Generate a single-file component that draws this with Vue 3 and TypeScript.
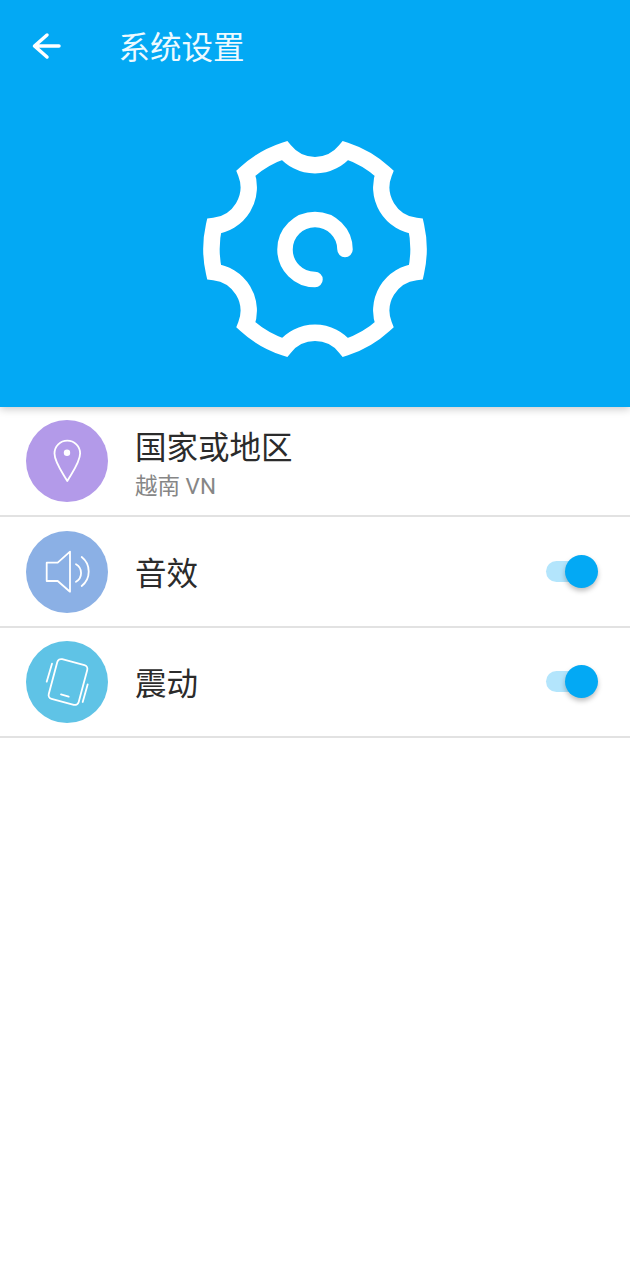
<script setup lang="ts">
interface Row {
  title: string
  sub?: string
  icon: 'pin' | 'sound' | 'shake'
  color: string
  toggle?: boolean
}

const rows: Row[] = [
  { title: '国家或地区', sub: '越南 VN', icon: 'pin', color: '#b39ae9' },
  { title: '音效', icon: 'sound', color: '#8bb0e5', toggle: true },
  { title: '震动', icon: 'shake', color: '#5fc3e6', toggle: true }
]
</script>

<template>
  <div class="page">
    <header class="hero">
      <div class="bar">
        <svg class="back" width="30" height="28" viewBox="0 0 30 28">
          <path d="M28 14H4M16 3 3.500 14 16 25" />
        </svg>
        <span class="bar-title">系统设置</span>
      </div>
      <svg class="gear" width="270" height="260" viewBox="0 0 270 260">
        <path
          d="M104.500 30.500A39 39 0 0 0 165.500 30.500A105 105 0 0 1 204 53A39 39 0 0 0 236 106A105 105 0 0 1 236 152A39 39 0 0 0 204 205A105 105 0 0 1 165.500 227.500A39 39 0 0 0 104.500 227.500A105 105 0 0 1 66 205A39 39 0 0 0 34 152A105 105 0 0 1 34 106A39 39 0 0 0 66 53A105 105 0 0 1 104.500 30.500Z"
        />
        <path class="swirl" d="M165 129.500A30 30 0 1 0 135 159.500" />
      </svg>
    </header>
    <ul class="list">
      <li v-for="row in rows" :key="row.title" class="row">
        <div class="badge" :style="{ background: row.color }">
          <svg width="82" height="82" viewBox="0 0 82 82">
            <template v-if="row.icon === 'pin'">
              <path d="M41.300 61C36 52 28.500 42 28.500 33.500A12.800 12.800 0 0 1 54.100 33.500C54.100 42 46.500 52 41.300 61Z" />
              <circle class="dot" cx="41" cy="32.700" r="3.200" />
            </template>
            <template v-else-if="row.icon === 'sound'">
              <path d="M20.700 31.700H31.700L44 20.700V60.700L31.700 50H20.700Z" />
              <path d="M50 33.300A10 10 0 0 1 50 50.700M55.700 26A18.500 18.500 0 0 1 55.700 55" />
            </template>
            <template v-else>
              <rect x="26.500" y="20.500" width="31" height="41" rx="4" transform="rotate(15 42 41)" />
              <path d="M35 53.300 42.700 55.700M26 22.700 20.700 40.700M61.700 43.300 56.700 61" />
            </template>
          </svg>
        </div>
        <div class="text">
          <div class="title">{{ row.title }}</div>
          <div v-if="row.sub" class="sub">{{ row.sub }}</div>
        </div>
        <div v-if="row.toggle" class="switch">
          <span class="track"></span>
          <span class="knob"></span>
        </div>
      </li>
    </ul>
  </div>
</template>

<style>
html,
body {
  margin: 0;
  background: #fff;
}
</style>

<style scoped>
.page {
  width: 630px;
  height: 1280px;
  background: #fff;
  font-family: Roboto, "Noto Sans CJK SC", sans-serif;
  overflow: hidden;
}

.hero {
  height: 407px;
  background: #03a9f4;
  box-shadow: 0 2px 8px rgba(0, 0, 0, 0.22);
  position: relative;
  z-index: 1;
}

.bar {
  height: 92px;
  display: flex;
  align-items: center;
  padding-left: 31px;
  color: #fff;
}

.back {
  margin-right: 57.500px;
}

.back path {
  fill: none;
  stroke: #fff;
  stroke-width: 3.500;
  stroke-linecap: round;
  stroke-linejoin: round;
}

.bar-title {
  font-size: 31.500px;
  line-height: 40px;
  margin-top: 6px;
  color: #eefaff;
}

.gear {
  display: block;
  margin: 28px 0 0 180px;
}

.gear path {
  fill: none;
  stroke: #fff;
  stroke-width: 16.500;
  stroke-linejoin: miter;
}

.gear .swirl {
  stroke-width: 15.500;
  stroke-linecap: round;
}

.list {
  list-style: none;
  margin: 0;
  padding: 0;
}

.row {
  height: 110.400px;
  box-sizing: border-box;
  border-bottom: 2px solid #e2e2e2;
  display: flex;
  align-items: center;
  padding: 0 32px 0 26px;
}

.badge {
  width: 82px;
  height: 82px;
  border-radius: 50%;
  flex: none;
}

.badge svg {
  display: block;
}

.badge path,
.badge rect {
  fill: none;
  stroke: #fff;
  stroke-width: 1.800;
  stroke-linecap: round;
  stroke-linejoin: round;
}

.badge .dot {
  fill: #fff;
}

.text {
  margin-left: 27px;
  padding-top: 8px;
  flex: 1;
}

.title {
  font-size: 31.500px;
  line-height: 40px;
  margin-bottom: 2px;
  color: #2b2b2b;
}

.sub {
  font-size: 22.500px;
  line-height: 30px;
  margin-top: 2px;
  color: #868686;
}

.switch {
  position: relative;
  width: 52px;
  height: 33px;
}

.track {
  position: absolute;
  left: 0;
  top: 6px;
  width: 44px;
  height: 21px;
  border-radius: 11px;
  background: #b3e5fc;
}

.knob {
  position: absolute;
  right: 0;
  top: 0;
  width: 33px;
  height: 33px;
  border-radius: 50%;
  background: #03a9f4;
  box-shadow: 0 3px 5px rgba(0, 0, 0, 0.25);
}
</style>
